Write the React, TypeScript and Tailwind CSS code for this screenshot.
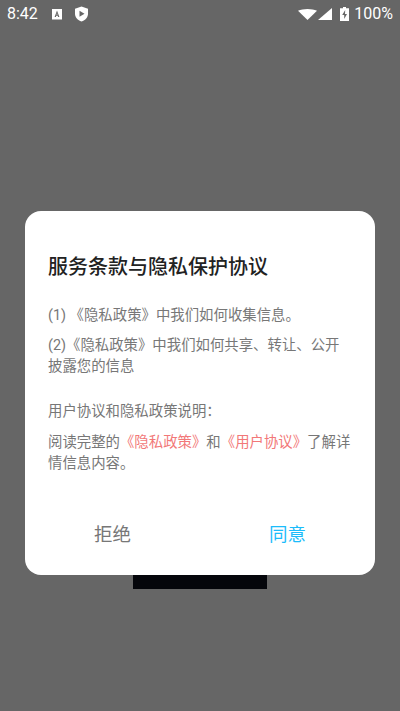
const font = { fontFamily: '"Roboto", "Noto Sans CJK SC", sans-serif' }

function StatusBar() {
  return (
    <div className="flex h-[28px] items-center pl-[7px] pr-[7px] text-white">
      <span className="text-[16px] leading-none">8:42</span>
      {/* notification icons */}
      <svg className="ml-[13px]" width="12" height="13" viewBox="0 0 12 13">
        <path fill="#fff" d="M1 1h10v10.500H1z" />
        <path fill="#666" d="M6 2.500 3.600 9h1.300l.4-1.200h1.400l.4 1.200h1.300L6 2.500zm-.4 4.200L6 5.100l.4 1.600h-.8z" />
      </svg>
      <svg className="ml-[11px]" width="15" height="16" viewBox="0 0 15 16">
        <path fill="#fff" d="M7.500 0.500 14 2.800v5c0 3.600-2.700 6.400-6.500 7.700C3.700 14.200 1 11.400 1 7.800v-5z" />
        <path fill="#666" d="M5.500 4.800v6l5-3z" />
      </svg>
      <div className="flex-1" />
      <svg width="19" height="11" viewBox="0 0 19 11">
        <path fill="#fff" d="M0 1.800C2.600 0.700 6 0 9.500 0s6.900 0.700 9.500 1.800L9.500 11z" />
      </svg>
      <svg className="ml-[1px]" width="14" height="12" viewBox="0 0 14 12">
        <path fill="#fff" d="M14 0v12H0z" />
      </svg>
      <svg className="ml-[8px]" width="9" height="14" viewBox="0 0 9 14">
        <path fill="#fff" d="M3 0h3v1.300h3V14H0V1.300h3z" />
        <path fill="#666" d="M5.200 3 2.200 8h2v4l2.800-5h-2z" />
      </svg>
      <span className="ml-[5px] text-[16px] leading-none">100%</span>
    </div>
  )
}

export default function App() {
  return (
    <div className="h-[711px] w-[400px] overflow-hidden bg-[#666666]" style={font}>
      <StatusBar />
      <div className="relative mx-[25px] mt-[183px]">
        {/* black block sticking out under the dialog */}
        <div className="absolute bottom-[-14px] left-[108px] h-[40px] w-[134px] bg-[#05060b]" />
        <div className="relative h-[364px] rounded-[16px] bg-white pl-[23px] pr-[22px] pt-[41px]">
          <h1 className="text-[20px] font-medium leading-[30px] text-[#222222]">服务条款与隐私保护协议</h1>
          <div className="mt-[23px] text-[14.4px] leading-[21px] text-[#777777] [text-spacing-trim:space-all]">
            <p>(1) 《隐私政策》中我们如何收集信息。</p>
            <p className="mt-[9px]">(2)《隐私政策》中我们如何共享、转让、公开<br />披露您的信息</p>
            <p className="mt-[24px]">用户协议和隐私政策说明：</p>
            <p className="mt-[10px]">
              阅读完整的<span className="text-[#f27878]">《隐私政策》</span>和<span className="text-[#f27878]">《用户协议》</span>了解详情信息内容。
            </p>
          </div>
          <div className="absolute inset-x-0 bottom-[20px] flex text-[18.5px] leading-[40px]">
            <button className="flex-1 text-[#777777]">拒绝</button>
            <button className="flex-1 text-[#1cbcfb]">同意</button>
          </div>
        </div>
      </div>
    </div>
  )
}
